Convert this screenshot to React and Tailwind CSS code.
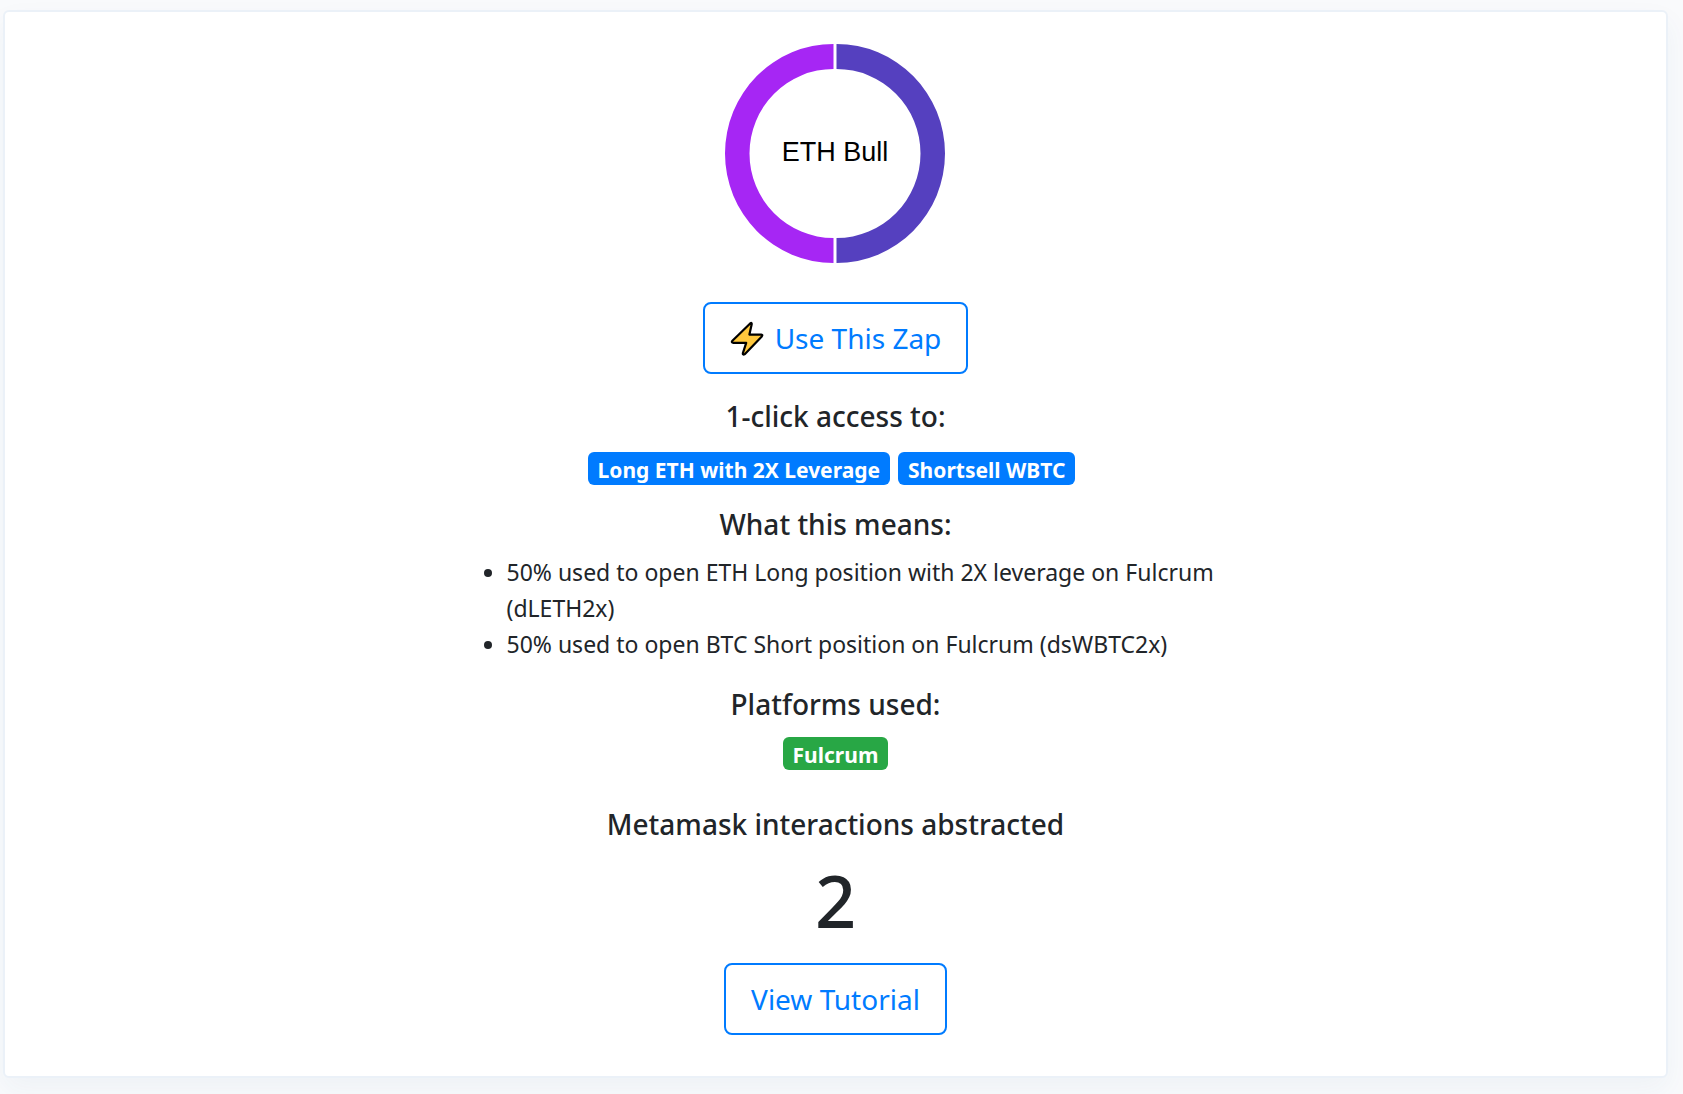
const font = "font-['Segoe_UI','Noto_Sans',sans-serif]";

function Heading({ children }) {
  return <h2 className="mb-3 text-center text-[28px] leading-9 font-medium">{children}</h2>;
}

function OutlineButton({ children }) {
  return (
    <button
      type="button"
      className="flex h-[72px] items-center justify-center gap-[11px] rounded-lg border-2 border-[#007bff] bg-white px-[25px] pt-px text-[28px] leading-[45px] font-normal text-[#007bff] hover:bg-blue-50"
    >
      {children}
    </button>
  );
}

function Bolt() {
  return (
    <svg width="34" height="36" viewBox="0 0 34 36" aria-hidden="true">
      <path
        d="M20.4 2.2Q22 1.4 21.7 3.2L19.4 13.6H31.3Q33 13.8 31.8 15.4L15 33Q12.6 34.4 12.8 32.4L16.2 21.8H3Q1 21.2 2.4 19.8Z"
        fill="#ffc83d"
        stroke="#000"
        strokeWidth="2.2"
        strokeLinejoin="round"
      />
    </svg>
  );
}

function Ring() {
  return (
    <svg width="221" height="221" viewBox="0 0 221 221" role="img" aria-label="ETH Bull allocation">
      <path d="M111.5 1A108.5 109.5 0 0 1 111.5 220V195A84 84.5 0 0 0 111.5 26Z" fill="#5540bf" />
      <path d="M108.5 1A108.5 109.5 0 0 0 108.5 220V195A84 84.5 0 0 1 108.5 26Z" fill="#a626f4" />
      <text x="110" y="118" textAnchor="middle" fontSize="27" fill="#000" fontFamily="Liberation Sans, Arial, sans-serif">
        ETH Bull
      </text>
    </svg>
  );
}

function Badge({ className, children }) {
  return (
    <span className={`flex h-[33px] items-center rounded-md px-[10px] pt-[2px] text-[21px] leading-6 font-bold text-white ${className}`}>
      {children}
    </span>
  );
}

export default function App() {
  return (
    <div className={`min-h-screen bg-[#f9fafc] pt-[10px] pr-[15px] pb-4 pl-[3px] text-[#212529] ${font}`}>
      <main className="flex flex-col items-center rounded-md border-2 border-[#ebf1f8] bg-white pt-[31px] pb-[41px] shadow-[0_12px_28px_rgba(40,90,130,0.05)]">
        <Ring />
        <div className="mt-[38px] mb-6">
          <OutlineButton>
            <Bolt />
            Use This Zap
          </OutlineButton>
        </div>
        <Heading>1-click access to:</Heading>
        <div className="mt-[6px] mb-[21px] flex gap-2 pr-2">
          <Badge className="bg-[#007bff]">Long ETH with 2X Leverage</Badge>
          <Badge className="bg-[#007bff]">Shortsell WBTC</Badge>
        </div>
        <Heading>What this means:</Heading>
        <ul className="mb-6 w-full max-w-[778px] list-disc pl-[60px] text-[23px] leading-9 font-normal">
          <li>50% used to open ETH Long position with 2X leverage on Fulcrum (dLETH2x)</li>
          <li>50% used to open BTC Short position on Fulcrum (dsWBTC2x)</li>
        </ul>
        <Heading>Platforms used:</Heading>
        <div className="mt-[3px] mb-9 flex">
          <Badge className="bg-[#28a745]">Fulcrum</Badge>
        </div>
        <Heading>Metamask interactions abstracted</Heading>
        <p className="mb-[17px] text-[72px] leading-[92px] font-medium">2</p>
        <OutlineButton>View Tutorial</OutlineButton>
      </main>
    </div>
  );
}
